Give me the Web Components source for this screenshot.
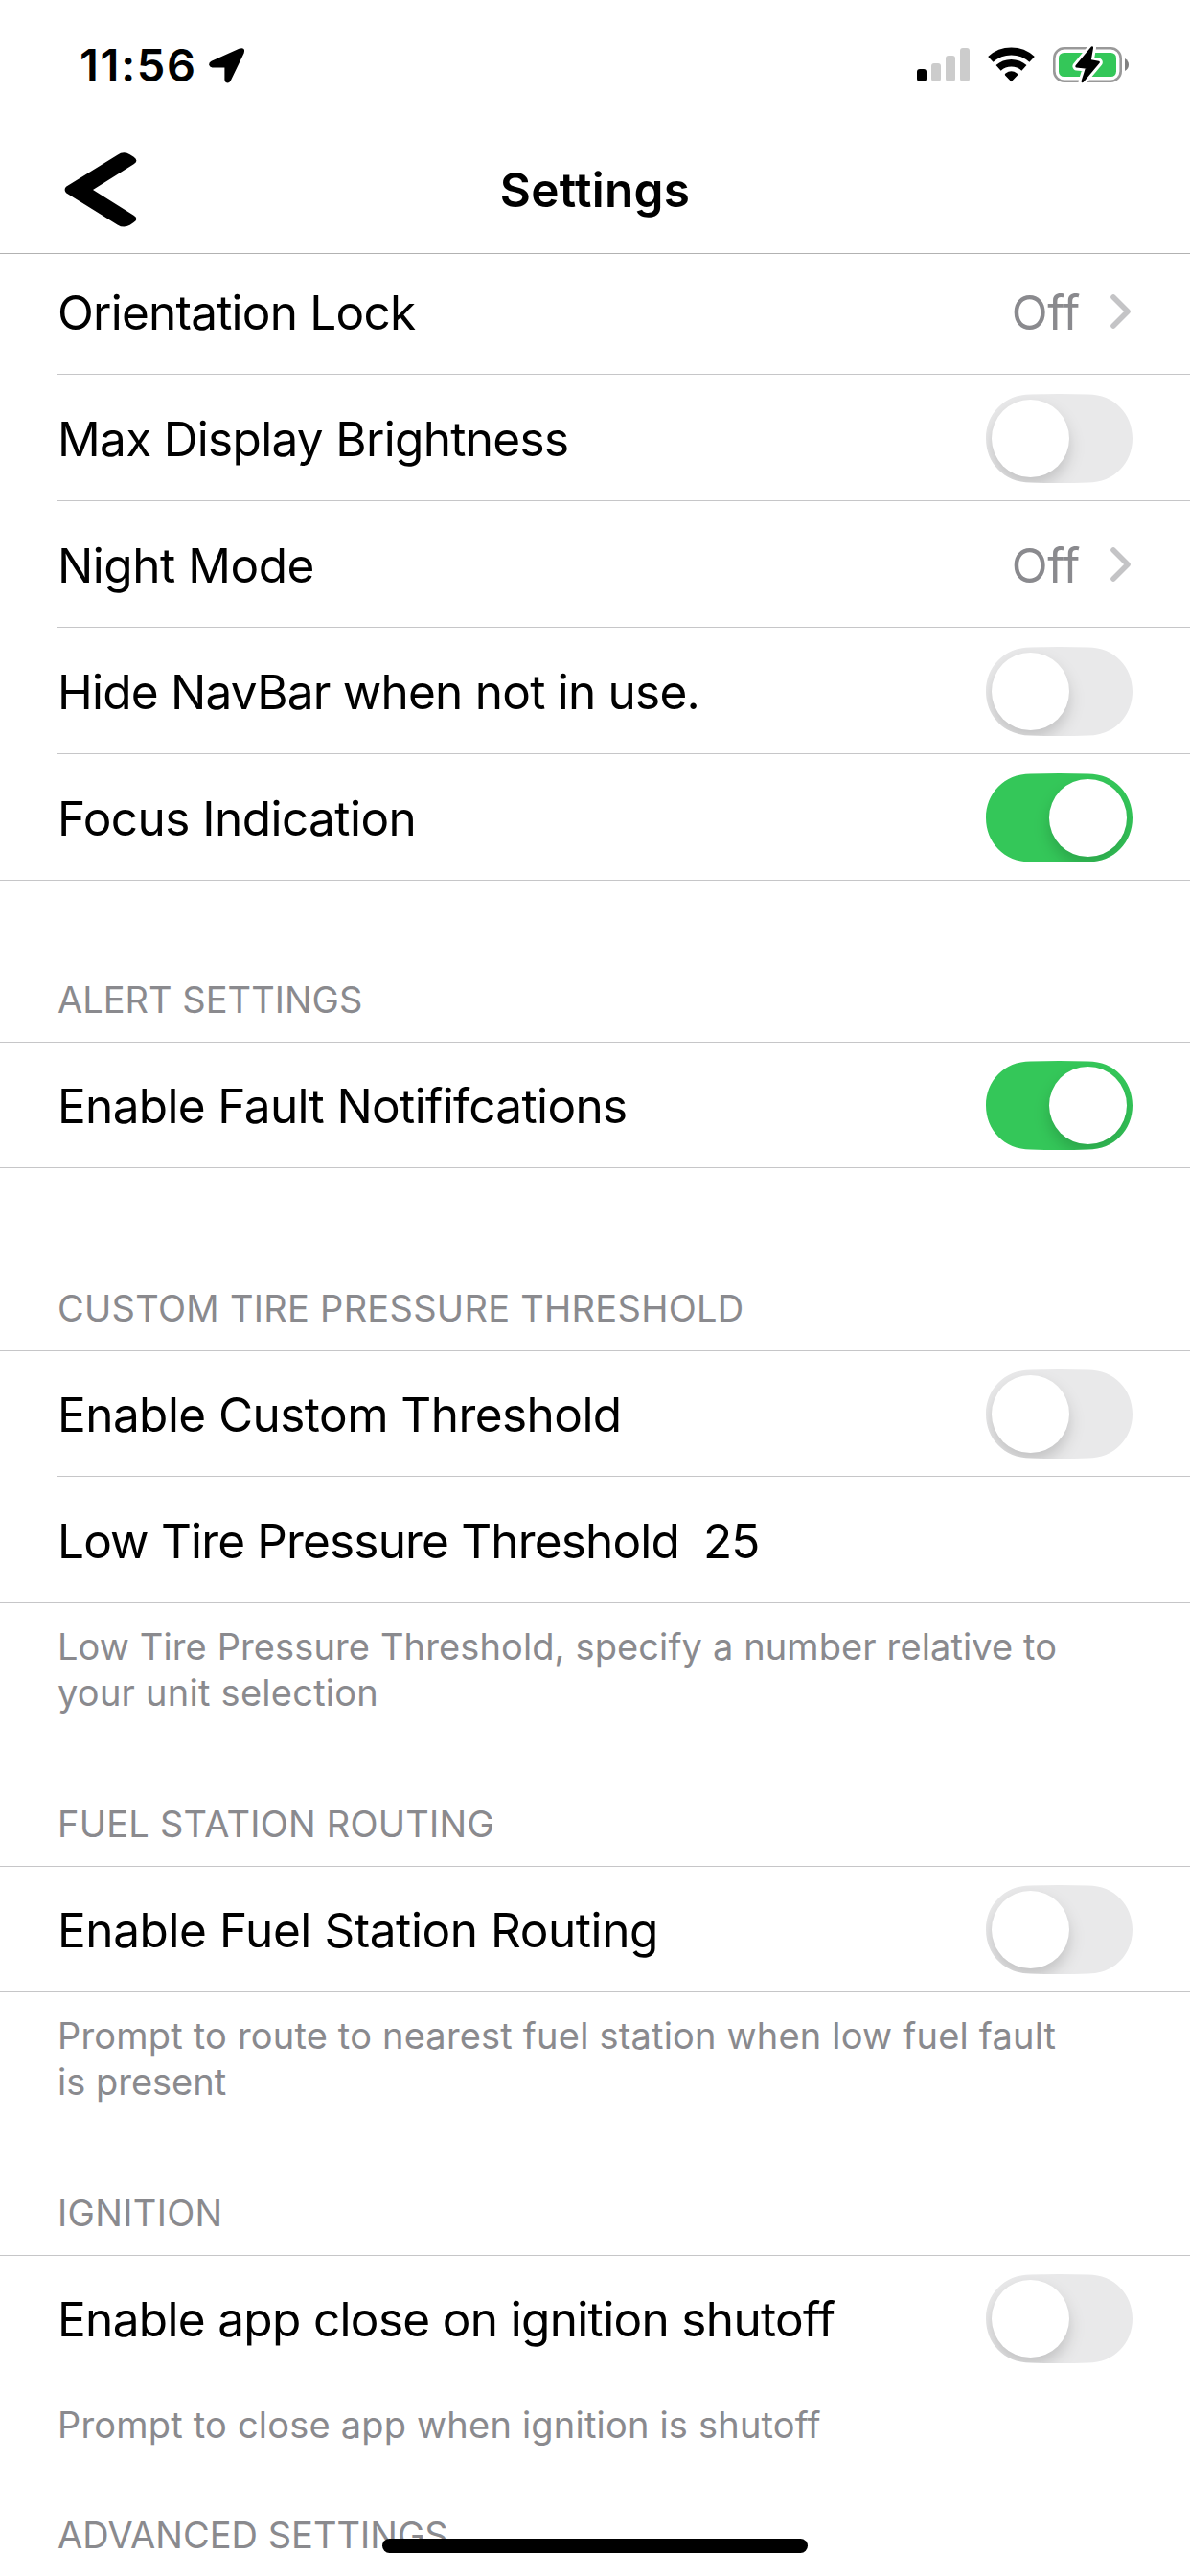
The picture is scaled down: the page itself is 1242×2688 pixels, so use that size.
<!DOCTYPE html>
<html lang="en">
<head>
<meta charset="utf-8">
<title>Settings</title>
<style>
  html, body { margin: 0; background: #fff; }
  body { width: 1242px; height: 2688px; overflow: hidden; }
</style>
</head>
<body>
<settings-screen></settings-screen>

<script>
const define = (name, html) => {
  const template = document.createElement('template');
  template.innerHTML = html;
  customElements.define(name, class extends HTMLElement {
    constructor() {
      super();
      this.attachShadow({ mode: 'open' }).appendChild(template.content.cloneNode(true));
    }
  });
};

define('status-bar', `
<style>
  :host { display: flex; align-items: center; height: 132px; box-sizing: border-box; padding: 4px 64px 0 83px; }
  .time { width: 134px; font-size: 47px; font-weight: 600; line-height: 56px; letter-spacing: 1.7px; white-space: nowrap; }
  .icons { display: flex; gap: 19px; margin-left: auto; }
  svg { display: block; }
</style>
<span class="time">11:56</span>
<svg width="39" height="40" viewBox="217 48 39 40"><path d="M249.5 50.7Q256.6 48.6 254.6 55.4L240.6 84.5Q238.8 87.4 235.8 86Q234.4 85.2 234.4 83V70.5L221.5 70.4Q218.6 70.1 218.1 67.6Q218 65 220.6 63.8Z"/></svg>
<div class="icons">
  <svg width="55" height="40" viewBox="957 48 55 40">
    <rect x="957" y="72" width="10" height="13" rx="3"/>
    <g fill="#ccc"><rect x="972" y="66" width="10" height="19" rx="3"/><rect x="987" y="58" width="10" height="27" rx="3"/><rect x="1002" y="50" width="10" height="35" rx="3"/></g>
  </svg>
  <svg width="49" height="40" viewBox="1031 48 49 40">
    <g fill="none" stroke="#000">
      <path stroke-width="8" d="M1033.9 61.9A32 32 0 0 1 1077.1 61.9"/>
      <path stroke-width="7.6" d="M1042.1 70.9A19.8 19.8 0 0 1 1068.9 70.9"/>
    </g>
    <path d="M1055.5 85.2L1049 78.6Q1048.3 77.3 1049.5 76.5Q1055.5 72.2 1061.5 76.5Q1062.7 77.3 1062 78.6Z"/>
  </svg>
  <svg width="79" height="40" viewBox="1099 48 79 40">
    <rect x="1100.3" y="50.3" width="69.4" height="34.4" rx="10.5" fill="none" stroke="#999" stroke-width="2.6"/>
    <rect x="1105" y="55" width="60" height="25" rx="5.5" fill="#34c759"/>
    <path d="M1174 61Q1178 63.5 1178 67.5T1174 74Z" fill="#808080"/>
    <path d="M1139.8 49.6L1123.6 69.2L1134.4 70.4L1129.8 85L1146.6 65L1137.4 63.4Z" fill="#fff" stroke="#fff" stroke-width="8.5" stroke-linejoin="round"/>
    <path d="M1139.8 49.6L1123.6 69.2L1134.4 70.4L1129.8 85L1146.6 65L1137.4 63.4Z" stroke="#000" stroke-width="2.6" stroke-linejoin="round"/>
  </svg>
</div>`);

define('nav-bar', `
<style>
  :host { display: grid; grid-template-columns: 1fr auto 1fr; align-items: center; height: 132px; border-bottom: 1px solid #b2b2b2; }
  svg { display: block; margin-left: 66px; }
  .title { font-size: 49.5px; font-weight: 600; line-height: 60px; letter-spacing: .27px; }
</style>
<svg width="78" height="80" viewBox="66 158 78 80"><path d="M69 194.8L122.5 161.8Q129 157.2 135.6 161.2L139.6 163.8Q145.2 167.7 139.6 171.3L97 198.1L139.6 224.8Q145.2 228.4 139.6 232L135.6 234.8Q129 238.6 122.5 234.4L69 201.2Q66.2 198 69 194.8Z"/></svg>
<span class="title"><slot></slot></span>`);

define('section-header', `
<style>
  :host { display: block; padding: 0 60px 20px; border-bottom: 1px solid #c6c6c8; font-size: 38px; line-height: 48px; color: #8a8a8e; white-space: nowrap; }
</style>
<slot></slot>`);

define('section-footer', `
<style>
  :host { display: flex; flex-direction: column; padding: 21px 60px 0; font-size: 38px; line-height: 48px; color: #8a8a8e; white-space: nowrap; }
</style>
<slot></slot>`);

define('setting-row', `
<style>
  :host { display: block; }
  .row { display: flex; align-items: flex-end; height: var(--row-height, 131px); padding: 0 60px; }
  .label { font-size: 49.5px; line-height: 60px; margin-bottom: 34px; white-space: pre; }
  .control { display: flex; align-items: flex-end; margin-left: auto; }
  .line { height: 1px; margin-left: 60px; background: #c6c6c8; }
  :host([last]) .line { margin-left: 0; }
</style>
<div class="row"><span class="label"><slot></slot></span><slot name="value"></slot><div class="control"><slot name="control"></slot></div></div>
<div class="line"></div>`);

define('row-value', `
<style>
  :host { display: block; font-size: 49.5px; line-height: 60px; margin: 0 0 34px 25px; letter-spacing: -.8px; }
</style>
<slot></slot>`);

define('disclosure-value', `
<style>
  :host { display: flex; align-items: flex-end; gap: 32px; }
  span { font-size: 49.5px; line-height: 60px; margin-bottom: 34px; letter-spacing: -.45px; color: #8a8a8e; }
  svg { display: block; margin: 0 2px 47px 0; }
</style>
<span><slot></slot></span>
<svg width="21" height="36" viewBox="0 0 21 36" fill="none" stroke="#c4c4c6" stroke-width="5.6" stroke-linecap="round" stroke-linejoin="round"><path d="M3 3L18 18L3 33"/></svg>`);

define('toggle-switch', `
<style>
  :host { display: block; width: 153px; height: 93px; margin-bottom: 18px; }
  svg { display: block; }
  .track { fill: #e9e9ea; }
  .thumb { fill: #fff; }
  .shade { fill: #000; fill-opacity: .17; }
  :host([on]) .track { fill: #34c759; }
  :host([on]) .knob { transform: translateX(60px); }
</style>
<svg width="153" height="93" viewBox="0 0 153 93">
  <defs>
    <clipPath id="c"><path d="M46.5 .5Q76.5 -.5 106.5 .5C134 .5 153 21 153 46.5S134 92.5 106.5 92.5Q76.5 93.5 46.5 92.5C19 92.5 0 72 0 46.5S19 .5 46.5 .5Z"/></clipPath>
    <filter id="b" x="-50%" y="-50%" width="200%" height="200%"><feGaussianBlur stdDeviation="8"/></filter>
  </defs>
  <g clip-path="url(#c)">
    <rect class="track" width="153" height="93"/>
    <g class="knob"><circle class="shade" cx="46.5" cy="55" r="40.5" filter="url(#b)"/><circle class="thumb" cx="46.5" cy="46.5" r="40.5"/></g>
  </g>
</svg>`);

define('home-indicator', `
<style>
  :host { position: absolute; left: 399px; top: 2649px; width: 444px; height: 15px; border-radius: 7.5px; background: #000; }
</style>`);

define('settings-screen', `
<style>
  :host { display: block; position: relative; width: 1242px; height: 2688px; overflow: hidden; background: #fff; color: #000; font-family: Inter, "Liberation Sans", sans-serif; font-weight: 400; }
  .first { --row-height: 130px; }
</style>
<status-bar></status-bar>
<nav-bar>Settings</nav-bar>
<setting-row style="--row-height:125px;letter-spacing:-.77px">Orientation Lock<disclosure-value slot="control">Off</disclosure-value></setting-row>
<setting-row style="letter-spacing:-.68px">Max Display Brightness<toggle-switch slot="control"></toggle-switch></setting-row>
<setting-row style="letter-spacing:-.47px">Night Mode<disclosure-value slot="control">Off</disclosure-value></setting-row>
<setting-row style="letter-spacing:-.77px">Hide NavBar when not in use.<toggle-switch slot="control"></toggle-switch></setting-row>
<setting-row last style="letter-spacing:-.55px">Focus Indication<toggle-switch slot="control" on></toggle-switch></setting-row>

<section-header style="margin-top:100px;letter-spacing:.02px">ALERT SETTINGS</section-header>
<setting-row class="first" last style="letter-spacing:-.645px">Enable Fault Notififcations<toggle-switch slot="control" on></toggle-switch></setting-row>

<section-header style="margin-top:122px;letter-spacing:.289px">CUSTOM TIRE PRESSURE THRESHOLD</section-header>
<setting-row class="first" style="letter-spacing:-.557px">Enable Custom Threshold<toggle-switch slot="control"></toggle-switch></setting-row>
<setting-row last style="letter-spacing:-.831px">Low Tire Pressure Threshold<row-value slot="value">25</row-value></setting-row>
<section-footer><span style="letter-spacing:.117px">Low Tire Pressure Threshold, specify a number relative to</span><span style="letter-spacing:.25px">your unit selection</span></section-footer>

<section-header style="margin-top:89px;letter-spacing:.25px">FUEL STATION ROUTING</section-header>
<setting-row class="first" last style="letter-spacing:-.423px">Enable Fuel Station Routing<toggle-switch slot="control"></toggle-switch></setting-row>
<section-footer><span style="letter-spacing:.194px">Prompt to route to nearest fuel station when low fuel fault</span><span>is present</span></section-footer>

<section-header style="margin-top:89px;letter-spacing:.345px">IGNITION</section-header>
<setting-row class="first" last style="letter-spacing:-.662px">Enable app close on ignition shutoff<toggle-switch slot="control"></toggle-switch></setting-row>
<section-footer><span style="letter-spacing:.199px">Prompt to close app when ignition is shutoff</span></section-footer>

<section-header style="margin-top:67px;letter-spacing:.02px">ADVANCED SETTINGS</section-header>
<home-indicator></home-indicator>`);
</script>
</body>
</html>
